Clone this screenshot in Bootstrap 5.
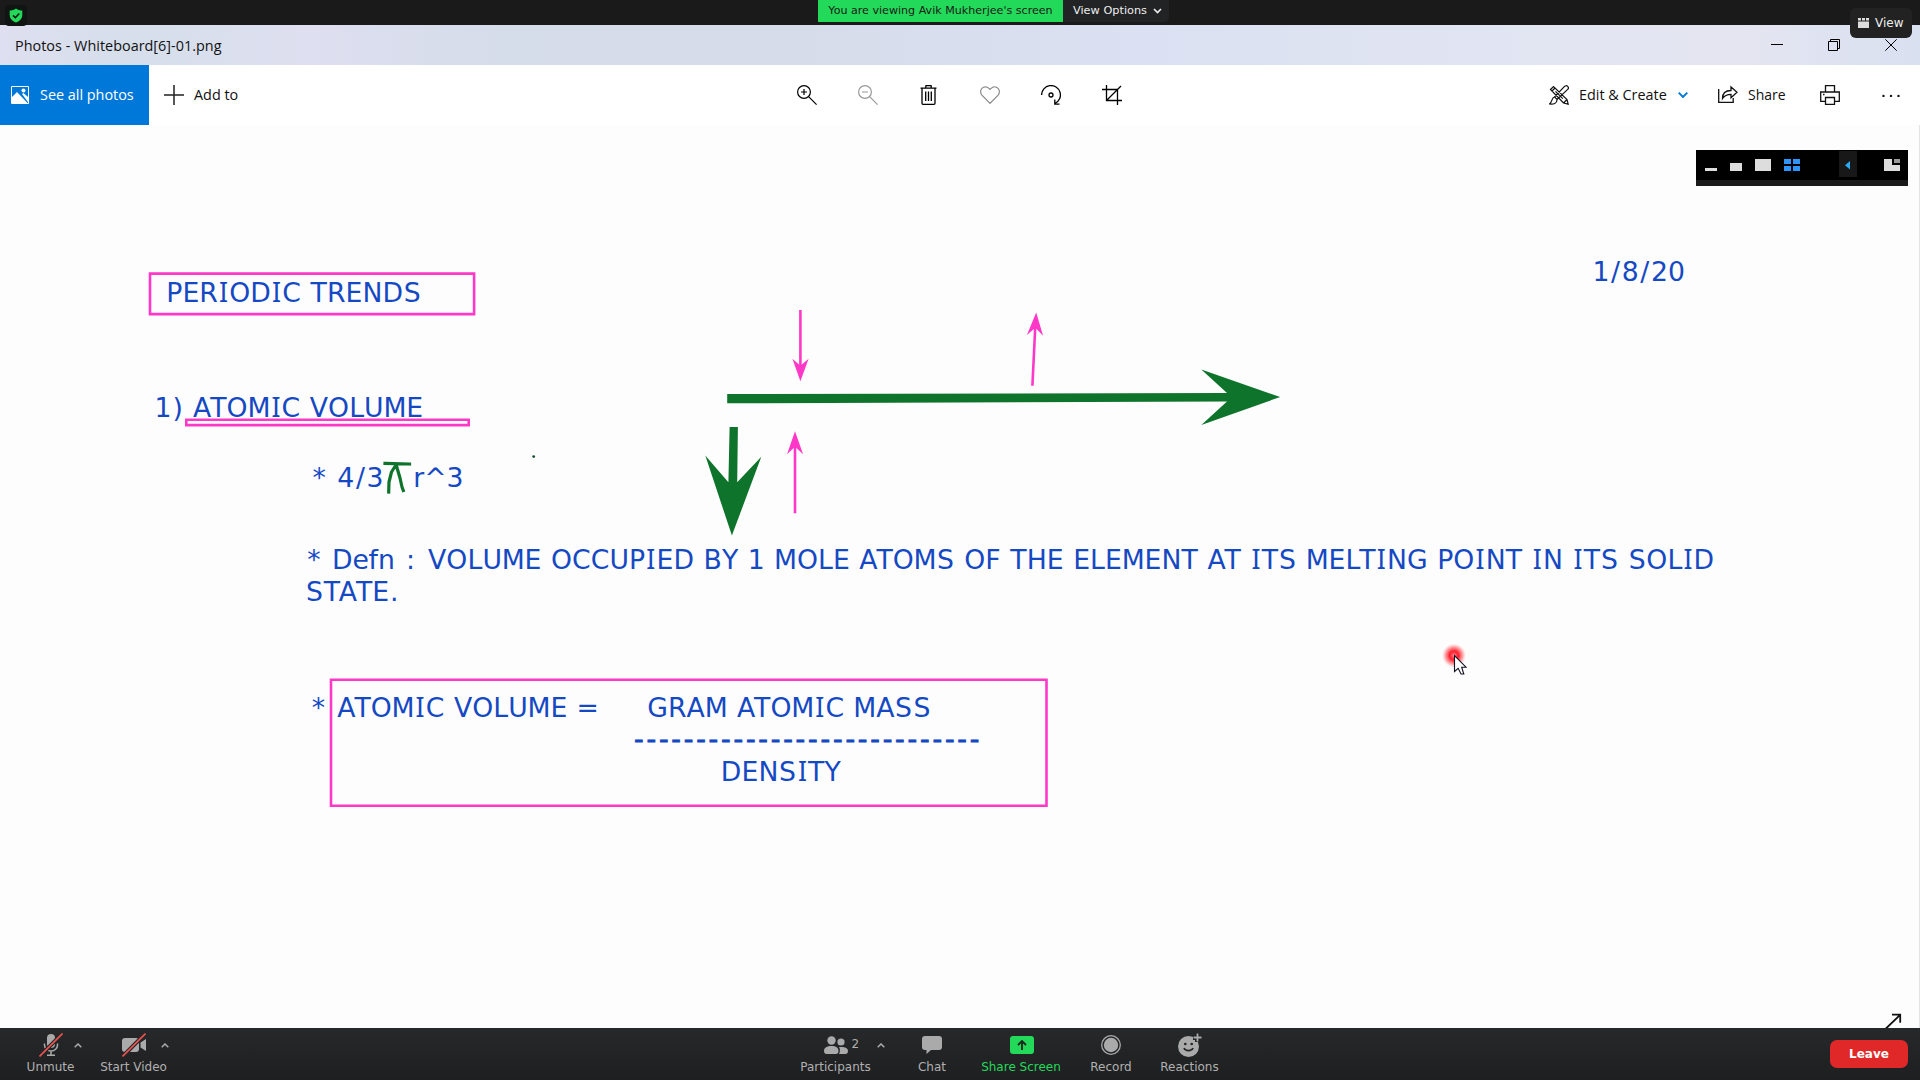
<!DOCTYPE html>
<html lang="en">
<head>
<meta charset="utf-8">
<title>Photos - Whiteboard[6]-01.png</title>
<link rel="stylesheet" href="https://cdn.jsdelivr.net/npm/bootstrap@5.3.0/dist/css/bootstrap.min.css">
<style>
  html, body { height: 100%; overflow: hidden; }
  body { background: #fdfdfd; color: #111; font-family: "Open Sans", "Noto Sans", sans-serif; font-size: 14.4px; line-height: 20px; }
  svg { display: block; flex: none; }
  .meet-font { font-family: "DejaVu Sans", sans-serif; font-size: 12px; line-height: 14px; }
  .sharebar { height: 25px; background: #1a1a1a; }
  .viewing { width: 245px; height: 22px; margin-left: 818px; background: #23d959; color: #1a1a1a; font-size: 11.1px; }
  .options { width: 106px; height: 22px; padding-left: 10px; gap: 6px; background: #222325; color: #eee; border-bottom-right-radius: 5px; font-size: 11.3px; }
  .shield { left: 5px; top: 5px; width: 22px; height: 21px; border-radius: 4px; background: #101513; }
  .viewbtn { left: 1850px; top: 8px; width: 62px; height: 30px; padding-left: 8px; gap: 6px; border-radius: 6px; background: #222; color: #eee; z-index: 3; }
  .titlebar { height: 40px; padding: 0 23px 0 15px; background: linear-gradient(90deg, #dedff0 0, #d6dfeb 7%, #dedff0 16%, #d5dcea 26%, #d6dcea 42%, #dbe1f2 60%, #e2e5f2 80%, #e4e5f1 91%, #d9e0f0 100%); }
  .ttl { padding-top: 1px; letter-spacing: .02px; }
  .winctl { gap: 45px; }
  .tools { height: 60px; background: #fff; }
  .seeall { width: 149px; padding-left: 11px; gap: 11px; background: #0078d9; color: #fff; }
  .addto { width: 648px; padding-left: 15px; gap: 10px; }
  .midtools { gap: 41px; }
  .righttools { padding-right: 20px; }
  .edt { margin-left: 10px; width: 99px; }
  .shr { margin-left: 30px; }
  .sht { margin-left: 10px; width: 72px; font-size: 14px; }
  .dts { margin-left: 42px; }
  .board { height: 903px; }
  .note { font-family: "DejaVu Sans", sans-serif; font-size: 26.7px; fill: #1549c4; }
  .note .slab { font-family: "Noto Sans", sans-serif; }
  .note .rule { stroke: #1549c4; stroke-width: .8px; }
  .thumbbar { left: 1696px; top: 150px; width: 212px; height: 36px; background: #000; border-bottom: 6px solid #1b1b1b; }
  .callbar { height: 52px; padding: 0 12px 0 8px; background: linear-gradient(#27282a, #1e1f21); color: #b0b0b0; }
  .ctl { height: 52px; padding-top: 5px; }
  .ctl .glyph { height: 27px; }
  .ctl svg.caret { position: absolute; top: 15px; }
  .caret-mic { left: 66px; } .caret-cam { left: 68px; } .caret-people { left: 90px; }
  .w85 { width: 85px } .w81 { width: 81px } .w97 { width: 97px } .w96 { width: 96px } .w82 { width: 82px } .w98 { width: 98px } .w59 { width: 59px }
  .midctl { margin-left: 613px; }
  .go { color: #23d959; }
  .go .glyph { padding-left: 1px; }
  .count2 { position: absolute; left: 64.5px; top: 9px; }
  .leave { width: 78px; height: 28px; border-radius: 7px; background: #e02828; color: #fff; }
</style>
<script src="https://cdn.jsdelivr.net/npm/bootstrap@5.3.0/dist/js/bootstrap.bundle.min.js"></script>
</head>
<body class="position-relative">

<header class="sharebar meet-font d-flex">
  <div class="viewing d-flex align-items-center justify-content-center text-nowrap">You are viewing Avik Mukherjee's screen</div>
  <div class="options d-flex align-items-center text-nowrap">View Options
    <svg width="9" height="6" viewBox="0 0 9 6" fill="none" stroke="#eee" stroke-width="1.6"><path d="M1 1l3.500 3.500L8 1"/></svg>
  </div>
</header>
<div class="shield position-absolute d-flex align-items-center justify-content-center">
  <svg width="14" height="15" viewBox="0 0 14 15"><path d="M7 .5C9 2 11 2.500 13.300 2.600V7c0 3.500-2.500 6-6.300 7.500C3.200 13 .7 10.500.7 7V2.600C3 2.500 5 2 7 .5z" fill="#23d959"/><path d="M4 7.400l2.300 2.300L10.300 5.500" fill="none" stroke="#101513" stroke-width="1.600"/></svg>
</div>
<div class="viewbtn meet-font position-absolute d-flex align-items-center">
  <svg width="11" height="10" viewBox="0 0 11 10" fill="#ddd"><path d="M0 0h3v2.600H0zM4 0h3v2.600H4zM8 0h3v2.600H8zM0 3.600h11V9.500q0 .5-.5.5H.5Q0 10 0 9.500z"/></svg>
  <span>View</span>
</div>

<div class="titlebar d-flex align-items-center justify-content-between">
  <span class="ttl">Photos - Whiteboard[6]-01.png</span>
  <div class="winctl d-flex">
    <svg width="12" height="12" viewBox="0 0 12 12" stroke="#000"><path d="M0 5.500h12"/></svg>
    <svg width="12" height="12" viewBox="0 0 12 12" fill="none" stroke="#000"><path d="M.5 2.500h9v9h-9zM2.500 2.500v-2h9v9h-2"/></svg>
    <svg width="12" height="12" viewBox="0 0 12 12" stroke="#000"><path d="M.3.3l11.400 11.400M11.700.3L.3 11.700"/></svg>
  </div>
</div>

<nav class="tools d-flex align-items-stretch">
  <div class="seeall d-flex align-items-center text-nowrap">
    <svg width="18" height="18" viewBox="0 0 18 18"><path d="M.5.500h17v17H.5z" fill="none" stroke="#fff"/><path d="M1 11l5-5 11 11.500H1zM11 8l1.500-1L17 11v5z" fill="#fff"/><circle cx="12.500" cy="4.500" r="2" fill="#fff"/></svg>
    <span>See all photos</span>
  </div>
  <div class="addto d-flex align-items-center">
    <svg width="20" height="20" viewBox="0 0 20 20" stroke="#222" stroke-width="1.500"><path d="M10 0v20M0 10h20"/></svg>
    <span>Add to</span>
  </div>
  <div class="midtools d-flex align-items-center">
    <svg width="20" height="20" viewBox="0 0 20 20" fill="none" stroke="#000" stroke-width="1.200"><circle cx="7" cy="7" r="6.400"/><path d="M11.600 11.600l8 8M4 7h6M7 4v6"/></svg>
    <svg width="20" height="20" viewBox="0 0 20 20" fill="none" stroke="#999" stroke-width="1.200"><circle cx="7" cy="7" r="6.400"/><path d="M11.600 11.600l8 8M4 7h6"/></svg>
    <svg width="20" height="20" viewBox="0 0 20 20" fill="none" stroke="#000" stroke-width="1.300"><path d="M1.500 3.200h16M6.800 3V1q0-.4.4-.4h4.600q.4 0 .4.400v2M3 3.500v14.800q0 1 1 1h11q1 0 1-1V3.500M6.700 6.500v9.500M9.500 6.500v9.500M12.300 6.500v9.500"/></svg>
    <svg width="20" height="20" viewBox="0 0 20 20" fill="none" stroke="#888" stroke-width="1.200"><path d="M10 18.300L1.900 10.200C.2 8.300.2 5.100 1.900 3.300c2-2 5-2 7 0L10 4.400l1.100-1.100c2-2 5-2 7 0 1.700 1.800 1.700 5 0 6.900z"/></svg>
    <svg width="20" height="20" viewBox="0 0 20 20" fill="none" stroke="#000" stroke-width="1.300"><path d="M.6 10A9.400 9.400 0 1 1 14 18.500M13.800 14.500v4.700h4.700"/><circle cx="10" cy="10" r="2"/></svg>
    <svg width="20" height="20" viewBox="0 0 20 20" fill="none" stroke="#000" stroke-width="1.300"><path d="M0 4.500h15.500V20M4.500 0v15.500H20M4.500 15.500L19 1"/></svg>
  </div>
  <div class="righttools d-flex align-items-center ms-auto text-nowrap">
    <svg width="20" height="20" viewBox="0 0 20 20" fill="none" stroke="#111" stroke-width="1.200"><path d="M1.500 4.500L4.500 1.500 18 14.500l1.200 4.700-4.700-1.200zM3 6l3-3M14.500 18l3.500-3.500M18.700 1.400c-1-1-2.400-.8-3.200 0L5.500 12l2.600 2.500L18.700 4.400c.8-.8.900-2.100 0-3zM5.500 12c-3 .5-2 5-5 7 4 .5 7.500-.5 7.600-4.500" fill="#fff"/><path d="M6.500 6.300l7.300 7.300"/></svg>
    <span class="edt">Edit &amp; Create</span>
    <svg width="10" height="6" viewBox="0 0 10 6" fill="none" stroke="#0078d9" stroke-width="1.900"><path d="M.7.700L5 5 9.300.7"/></svg>
    <svg class="shr" width="20" height="20" viewBox="0 0 20 20" fill="none" stroke="#111" stroke-width="1.300"><path d="M.7 4v13.300h14.500V13M4.500 13.500C4.500 8 8 5.500 13 5.500V2l6 5.300-6 5.500V9.300c-4 0-6.500 1-8.500 4.200z"/></svg>
    <span class="sht">Share</span>
    <svg width="20" height="20" viewBox="0 0 20 20" fill="none" stroke="#111" stroke-width="1.300"><path d="M5.500 7V.700h9V7M5.500 16.300H.7V7h18.600v9.300h-4.800M5.500 12.500h9v6.800h-9zM3 9.500h1.500"/></svg>
    <svg class="dts" width="18" height="4" viewBox="0 0 18 4" fill="#111"><circle cx="1.500" cy="3" r="1.200"/><circle cx="9" cy="3" r="1.200"/><circle cx="16.500" cy="3" r="1.200"/></svg>
  </div>
</nav>

<main class="board">
<svg width="1920" height="903" viewBox="0 125 1920 903">
  <g class="note">
    <text data-x="166.200" y="301.700">PERIODIC TRENDS</text>
    <text data-x="1592.500" y="280.900">1/8/20</text>
    <text data-x="154.500" y="417">1) ATOMIC VOLUME</text>
    <text data-x="310.800" y="486.500">* 4/3</text>
    <text data-x="413" y="486.500">r^3</text>
    <text data-x="305.500" y="568.900">* Defn :</text>
    <text data-x="428" y="568.900">VOLUME OCCUPIED BY 1 MOLE ATOMS OF THE ELEMENT AT ITS MELTING POINT IN ITS SOLID</text>
    <text data-x="305.300" y="600.700">STATE.</text>
    <text data-x="310" y="716.700">*</text>
    <text data-x="337.300" y="716.700">ATOMIC VOLUME =</text>
    <text data-x="647.200" y="716.700">GRAM ATOMIC MASS</text>
    <text class="rule" data-x="632.600" y="748.200">----------------------------</text>
    <text data-x="720.800" y="780.600">DENSITY</text>
  </g>
  <g fill="none" stroke="#ff38c8" stroke-width="2.600">
    <path d="M150 273.600H474.100V314.100H150zM186.300 419.700H468.700V425.100H186.300zM331 679.700H1046.500V805.800H331z"/>
    <path d="M800.400 310V368M1032.400 385.700L1035.300 326M795 513.300V446"/>
  </g>
  <path fill="#ff38c8" d="M792.400 358.700l8 7 8.200-7-8.200 22.500zM1036.200 312.500l6.900 23.300-7.700-8-8.500 7.300zM795 431.300l8.100 23-8.100-7.500-8 7.500z"/>
  <path fill="#0f742b" d="M727.200 394L1227 393 1201.300 369.600 1280.200 397 1201.300 425 1227 401.500 727.200 403.300zM729.600 427H737.900L737.200 482.300 761.300 456.800 731.900 535.500 705.300 455.600 728.400 482.300z"/>
  <g fill="none" stroke="#0f742b" stroke-width="3.200" stroke-linecap="square" stroke-linejoin="round"><path d="M385 463.400L409.500 464M395.700 465.500L391.500 472 389 482 388.700 492M396.500 466L400 478 402 487 403.300 490.500"/></g>
  <circle cx="533.700" cy="456.600" r="1.400" fill="#174f2a"/>
  <defs><radialGradient id="laser"><stop offset="0" stop-color="#ff9aa2"/><stop offset=".2" stop-color="#ff4450"/><stop offset=".38" stop-color="#ff1f2c"/><stop offset=".7" stop-color="#ff5a62" stop-opacity=".6"/><stop offset="1" stop-color="#ff9a9a" stop-opacity="0"/></radialGradient></defs>
  <circle cx="1454" cy="655.500" r="12" fill="url(#laser)"/>
  <path d="M1454.500 655.500V671.500L1458.200 668.300 1461 674H1463.800L1461.700 667.200H1466z" fill="#fff" stroke="#111122" stroke-width="1.100"/>
  <path d="M1886 1028.500L1900 1015M1892 1014.700h8.200v8" fill="none" stroke="#111" stroke-width="1.800"/>
  <path d="M1919.500 125V1028" stroke="#e4e4e4"/>
</svg>
</main>

<div class="thumbbar position-absolute">
  <svg width="212" height="30" viewBox="0 0 212 30"><path fill="#ddd" d="M9 18h12v3H9zM34 13h12v8H34zM59 9h16v12H59zM188 9h8v6h8v6h-16z"/><path fill="#999" d="M198 9h6v4h-6z"/><path fill="#2d95ff" d="M88 9h7v5h-7zM97 9h7v5h-7zM88 16h7v5h-7zM97 16h7v5h-7z"/><path fill="#181818" d="M143 1h18v26h-18z"/><path fill="#28aaf5" d="M154 11v8.500l-5-4.250z"/></svg>
</div>

<footer class="callbar meet-font d-flex align-items-center text-nowrap">
  <div class="ctl w85 position-relative d-flex flex-column align-items-center">
    <div class="glyph"><svg width="24" height="25" viewBox="0 0 24 25"><rect x="8" y="1" width="8" height="14" rx="4" fill="#aaa"/><path d="M5.500 10.500v1.500a6.500 6 0 0 0 13 0v-1.500M12 18v4M8 22.300h8" fill="none" stroke="#aaa" stroke-width="1.500"/><path d="M.5 23.500L23.500.5" stroke="#27282a" stroke-width="4"/><path d="M.5 23.500L23.500.5" stroke="#ef5350" stroke-width="1.600"/></svg></div>
    <svg class="caret caret-mic" width="8" height="5" viewBox="0 0 8 5" fill="none" stroke="#aaa" stroke-width="1.500"><path d="M.7 4.300L4 1l3.300 3.300"/></svg>
    <span>Unmute</span>
  </div>
  <div class="ctl w81 position-relative d-flex flex-column align-items-center">
    <div class="glyph"><svg width="24" height="25" viewBox="0 0 24 25"><rect x="0" y="5" width="17" height="14" rx="3" fill="#aaa"/><path d="M18.500 9.500L24 6v12l-5.500-3.500z" fill="#aaa"/><path d="M.5 23.500L23.500.5" stroke="#27282a" stroke-width="4"/><path d="M.5 23.500L23.500.5" stroke="#ef5350" stroke-width="1.600"/></svg></div>
    <svg class="caret caret-cam" width="8" height="5" viewBox="0 0 8 5" fill="none" stroke="#aaa" stroke-width="1.500"><path d="M.7 4.300L4 1l3.300 3.300"/></svg>
    <span>Start Video</span>
  </div>
  <div class="midctl d-flex">
    <div class="ctl w97 position-relative d-flex flex-column align-items-center">
      <div class="glyph"><svg width="24" height="25" viewBox="0 0 24 25" fill="#aaa"><circle cx="7.500" cy="7.500" r="4.200"/><circle cx="17" cy="9" r="3.600"/><path d="M0 18c0-3.500 3-5 7.500-5s7 1.500 7 5c0 2-1 3-2.500 3H2.500C1 21 0 20 0 18zM15 14c5-.5 9 .5 9 4 0 2-1 3-2.500 3H15c1.200-2.500 1.300-5 0-7z"/></svg></div>
      <span class="count2">2</span>
      <svg class="caret caret-people" width="8" height="5" viewBox="0 0 8 5" fill="none" stroke="#aaa" stroke-width="1.500"><path d="M.7 4.300L4 1l3.300 3.300"/></svg>
      <span>Participants</span>
    </div>
    <div class="ctl w96 d-flex flex-column align-items-center">
      <div class="glyph"><svg width="20" height="25" viewBox="0 0 20 25" fill="#aaa"><path d="M3 3h14q3 0 3 3v8q0 3-3 3H9l-4.500 4V17H3q-3 0-3-3V6q0-3 3-3z"/></svg></div>
      <span>Chat</span>
    </div>
    <div class="ctl w82 go d-flex flex-column align-items-center">
      <div class="glyph"><svg width="24" height="25" viewBox="0 0 24 25"><rect y="3" width="24" height="18" rx="3" fill="#23d959"/><path d="M12 17V8.500M8 12l4-4 4 4" fill="none" stroke="#1c2a20" stroke-width="1.900"/></svg></div>
      <span>Share Screen</span>
    </div>
    <div class="ctl w98 d-flex flex-column align-items-center">
      <div class="glyph"><svg width="22" height="25" viewBox="0 0 22 25"><circle cx="11" cy="12" r="9.300" fill="none" stroke="#aaa" stroke-width="1.300"/><circle cx="11" cy="12" r="7.200" fill="#aaa"/></svg></div>
      <span>Record</span>
    </div>
    <div class="ctl w59 d-flex flex-column align-items-center">
      <div class="glyph"><svg width="24" height="25" viewBox="0 0 24 25"><circle cx="10.500" cy="13.500" r="10.500" fill="#aaa"/><path d="M19.500 0v9M15 4.500h9" stroke="#232426" stroke-width="5"/><path d="M19.500.5v8M15.500 4.500h8" stroke="#aaa" stroke-width="1.800"/><circle cx="7.300" cy="11" r="1.300" fill="#232426"/><circle cx="13.700" cy="11" r="1.300" fill="#232426"/><path d="M6 15c1.200 3.500 7.800 3.500 9 0" fill="none" stroke="#232426" stroke-width="1.600"/></svg></div>
      <span>Reactions</span>
    </div>
  </div>
  <div class="leave ms-auto fw-bold d-flex align-items-center justify-content-center">Leave</div>
</footer>

<script>
  // Per-letter advances (em) used to set the whiteboard lettering; each glyph is centred in its cell.
  const adv = { A:.684,B:.686,C:.698,D:.771,E:.632,F:.575,G:.775,H:.751,I:.421,L:.557,M:.843,N:.748,O:.787,P:.603,R:.695,S:.684,T:.616,U:.732,V:.684,Y:.615,
    e:.596,f:.352,n:.633,r:.427," ":.352,"*":.636,"/":.454,"^":.818,"=":.818,":":.454,".":.364,")":.454,"-":.464 };
  const own = { I:.339,M:.863,S:.635,T:.611,Y:.611,"*":.5,"/":.337,"^":.838,"=":.838,":":.337,".":.318,")":.39,"-":.361,r:.411 };
  const kern = { AT: -.05, TA: -.05, LT: -.05 };
  const size = 26.8;
  document.querySelectorAll(".note text").forEach(t => {
    let x = +t.dataset.x; const xs = [], s = t.textContent;
    [...s].forEach((c, i) => {
      const a = adv[c] ?? .636;
      xs.push((x + (a - (own[c] ?? a)) / 2 * size).toFixed(1));
      x += (a + (kern[s.slice(i, i + 2)] ?? 0)) * size;
    });
    t.setAttribute("x", xs.join(" "));
    t.innerHTML = s.replace(/I/g, '<tspan class="slab">I</tspan>');
  });
</script>
</body>
</html>
